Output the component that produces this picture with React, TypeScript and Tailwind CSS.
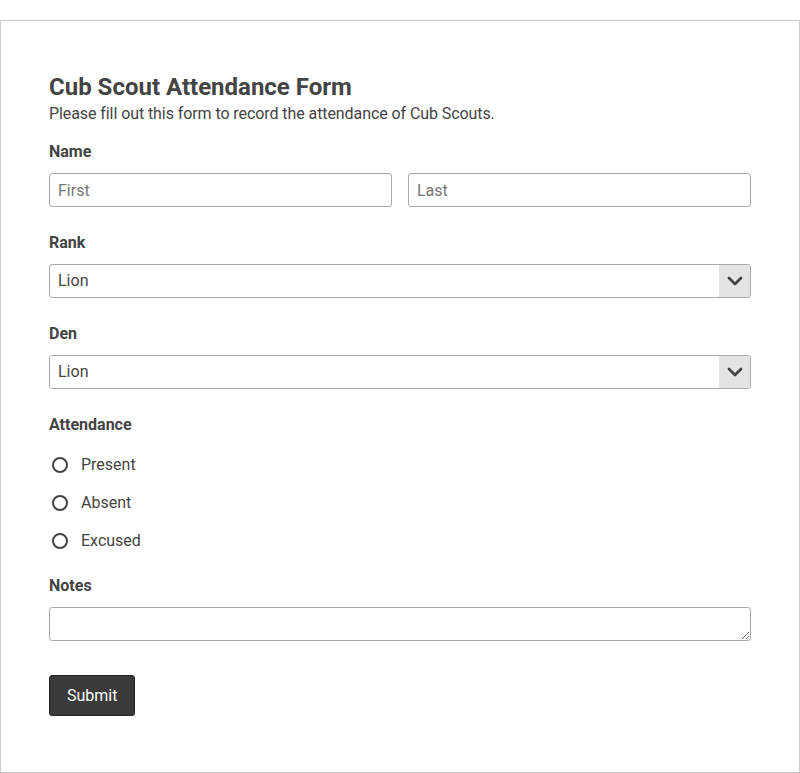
import { useState } from 'react';

function ChevronDown() {
  return (
    <svg width="16" height="10" viewBox="0 0 16 10" fill="none" stroke="#444" strokeWidth="2.8" strokeLinecap="round" strokeLinejoin="round">
      <path d="M2 2l6 6 6-6" />
    </svg>
  );
}

function SelectBox({ value }: { value: string }) {
  return (
    <div className="flex h-[34px] w-full overflow-hidden rounded-[3px] border border-[#aaa] bg-white">
      <div className="flex flex-1 items-center px-2 text-[16px] text-[#444]">{value}</div>
      <div className="flex w-[31px] items-center justify-center bg-[#e4e4e4]">
        <ChevronDown />
      </div>
    </div>
  );
}

export default function App() {
  const [attendance, setAttendance] = useState('');
  const options = ['Present', 'Absent', 'Excused'];

  return (
    <div className="bg-white pt-[20px] font-['Roboto',sans-serif] text-[#444]">
      <div className="border border-[#ccc] px-[48px] pb-[56px] pt-[49px]">
        <h1 className="text-[24px] font-bold leading-[34px] text-[#444]">Cub Scout Attendance Form</h1>
        <p className="text-[16px] leading-[20px] tracking-[-0.005em] text-[#444]">
          Please fill out this form to record the attendance of Cub Scouts.
        </p>

        <label className="mt-[18px] block text-[16px] font-bold leading-[20px]">Name</label>
        <div className="mt-[11px] flex gap-[16px]">
          <input
            placeholder="First"
            className="h-[34px] flex-1 rounded-[3px] border border-[#aaa] px-2 text-[16px] text-[#444] placeholder:text-[#777]"
          />
          <input
            placeholder="Last"
            className="h-[34px] flex-1 rounded-[3px] border border-[#aaa] px-2 text-[16px] text-[#444] placeholder:text-[#777]"
          />
        </div>

        <label className="mt-[26px] block text-[16px] font-bold leading-[20px]">Rank</label>
        <div className="mt-[11px]">
          <SelectBox value="Lion" />
        </div>

        <label className="mt-[26px] block text-[16px] font-bold leading-[20px]">Den</label>
        <div className="mt-[11px]">
          <SelectBox value="Lion" />
        </div>

        <label className="mt-[26px] block text-[16px] font-bold leading-[20px]">Attendance</label>
        <div className="mt-[18px] flex flex-col gap-[14px]">
          {options.map((o) => (
            <div
              key={o}
              className="flex h-[24px] cursor-pointer items-center"
              onClick={() => setAttendance(o)}
            >
              <span className="ml-[3px] flex h-[16px] w-[16px] items-center justify-center rounded-full border-2 border-[#444]">
                {attendance === o && <span className="h-[8px] w-[8px] rounded-full bg-[#444]" />}
              </span>
              <span className="ml-[13px] text-[16px]">{o}</span>
            </div>
          ))}
        </div>

        <label className="mt-[23px] block text-[16px] font-bold leading-[20px]">Notes</label>
        <textarea className="mt-[11px] block h-[34px] w-full resize-y rounded-[3px] border border-[#aaa] px-2 text-[16px]" />

        <button
          type="button"
          className="mt-[34px] h-[41px] rounded-[3px] border border-[#222] bg-[#3a3a3a] px-[17px] text-[16px] text-white"
        >
          Submit
        </button>
      </div>
    </div>
  );
}
